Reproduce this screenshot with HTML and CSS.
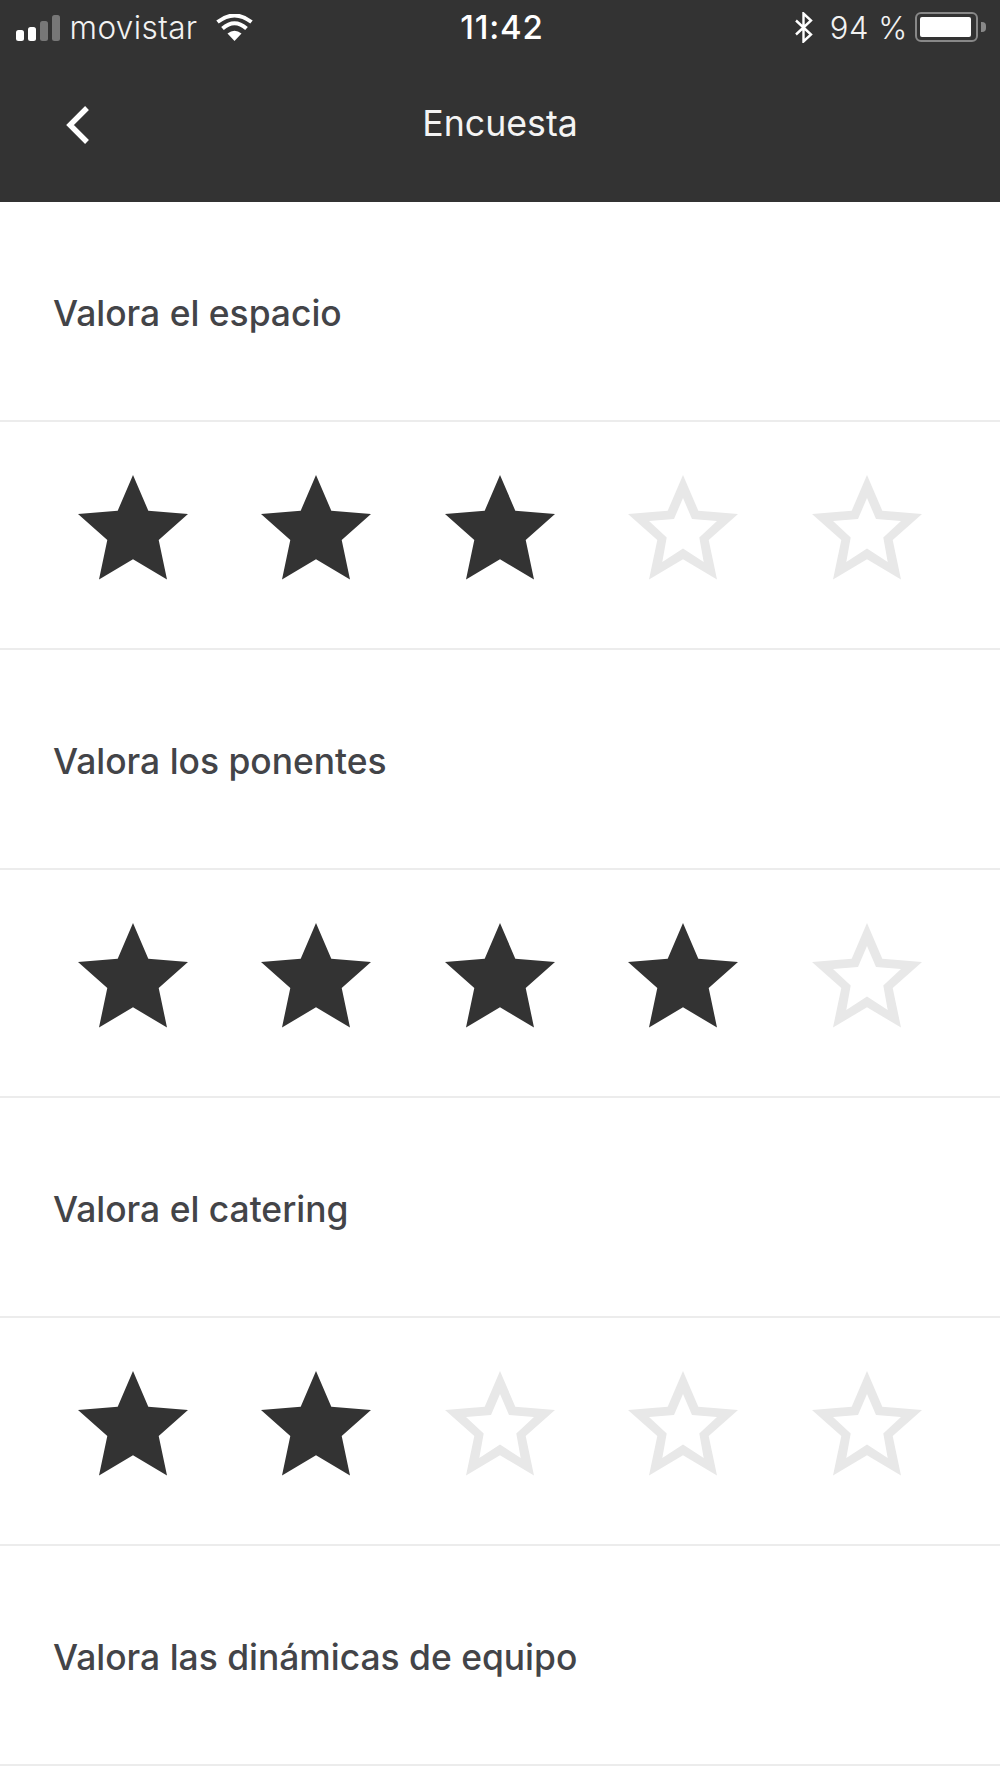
FILE: index.html
```html
<!DOCTYPE html>
<html lang="es">
<head>
<meta charset="utf-8">
<title>Encuesta</title>
<link rel="stylesheet" href="styles.css">
</head>
<body>
<header class="header">
  <div class="status">
    <div class="status-left">
      <div class="signal"><i class="b1"></i><i class="b2"></i><i class="b3 off"></i><i class="b4 off"></i></div>
      <span class="carrier">movistar</span>
      <svg class="wifi" viewBox="0 0 37 27"><path d="M18.5 27 L11.5 19.5 Q18.5 14 25.5 19.5 Z" fill="#fff"/><path d="M6.5 14.5 Q18.5 4 30.5 14.5" fill="none" stroke="#fff" stroke-width="4"/><path d="M1.5 8 Q18.5 -5 35.5 8" fill="none" stroke="#fff" stroke-width="4"/></svg>
    </div>
    <span class="time">11:42</span>
    <div class="status-right">
      <svg class="bt" viewBox="0 0 18 31"><path d="M1 8.5 L16 22.5 L8.5 29.5 V1.5 L16 8.5 L1 22.5" fill="none" stroke="#fff" stroke-width="2.4"/></svg>
      <span class="pct">94 %</span>
      <div class="battery"><div class="battery-fill"></div></div>
      <div class="nub"></div>
    </div>
  </div>
  <div class="nav">
    <svg class="back" viewBox="0 0 25 40"><path d="M22 3 L5 20 L22 37" fill="none" stroke="#fff" stroke-width="5.4"/></svg>
    <h1 class="nav-title">Encuesta</h1>
  </div>
</header>
<main>
  <h2 class="question">Valora el espacio</h2>
  <div class="stars">
    <svg class="star" viewBox="0 0 110 105"><path class="on" d="M55 0 L70.3 35.7 L110 39 L80.7 65 L89 104.5 L55 84.3 L21 104.5 L29.3 65 L0 39 L39.7 35.7 Z"/></svg>
    <svg class="star" viewBox="0 0 110 105"><path class="on" d="M55 0 L70.3 35.7 L110 39 L80.7 65 L89 104.5 L55 84.3 L21 104.5 L29.3 65 L0 39 L39.7 35.7 Z"/></svg>
    <svg class="star" viewBox="0 0 110 105"><path class="on" d="M55 0 L70.3 35.7 L110 39 L80.7 65 L89 104.5 L55 84.3 L21 104.5 L29.3 65 L0 39 L39.7 35.7 Z"/></svg>
    <svg class="star" viewBox="0 0 110 105"><path class="off" fill-rule="evenodd" d="M55 0 L70.3 35.7 L110 39 L80.7 65 L89 104.5 L55 84.3 L21 104.5 L29.3 65 L0 39 L39.7 35.7 Z M55 23 L46 44 L21 46 L38.7 62.5 L34.3 87 L55 73.5 L75.7 87 L71.3 62.5 L89 46 L64 44 Z"/></svg>
    <svg class="star" viewBox="0 0 110 105"><path class="off" fill-rule="evenodd" d="M55 0 L70.3 35.7 L110 39 L80.7 65 L89 104.5 L55 84.3 L21 104.5 L29.3 65 L0 39 L39.7 35.7 Z M55 23 L46 44 L21 46 L38.7 62.5 L34.3 87 L55 73.5 L75.7 87 L71.3 62.5 L89 46 L64 44 Z"/></svg>
  </div>
  <h2 class="question">Valora los ponentes</h2>
  <div class="stars">
    <svg class="star" viewBox="0 0 110 105"><path class="on" d="M55 0 L70.3 35.7 L110 39 L80.7 65 L89 104.5 L55 84.3 L21 104.5 L29.3 65 L0 39 L39.7 35.7 Z"/></svg>
    <svg class="star" viewBox="0 0 110 105"><path class="on" d="M55 0 L70.3 35.7 L110 39 L80.7 65 L89 104.5 L55 84.3 L21 104.5 L29.3 65 L0 39 L39.7 35.7 Z"/></svg>
    <svg class="star" viewBox="0 0 110 105"><path class="on" d="M55 0 L70.3 35.7 L110 39 L80.7 65 L89 104.5 L55 84.3 L21 104.5 L29.3 65 L0 39 L39.7 35.7 Z"/></svg>
    <svg class="star" viewBox="0 0 110 105"><path class="on" d="M55 0 L70.3 35.7 L110 39 L80.7 65 L89 104.5 L55 84.3 L21 104.5 L29.3 65 L0 39 L39.7 35.7 Z"/></svg>
    <svg class="star" viewBox="0 0 110 105"><path class="off" fill-rule="evenodd" d="M55 0 L70.3 35.7 L110 39 L80.7 65 L89 104.5 L55 84.3 L21 104.5 L29.3 65 L0 39 L39.7 35.7 Z M55 23 L46 44 L21 46 L38.7 62.5 L34.3 87 L55 73.5 L75.7 87 L71.3 62.5 L89 46 L64 44 Z"/></svg>
  </div>
  <h2 class="question">Valora el catering</h2>
  <div class="stars">
    <svg class="star" viewBox="0 0 110 105"><path class="on" d="M55 0 L70.3 35.7 L110 39 L80.7 65 L89 104.5 L55 84.3 L21 104.5 L29.3 65 L0 39 L39.7 35.7 Z"/></svg>
    <svg class="star" viewBox="0 0 110 105"><path class="on" d="M55 0 L70.3 35.7 L110 39 L80.7 65 L89 104.5 L55 84.3 L21 104.5 L29.3 65 L0 39 L39.7 35.7 Z"/></svg>
    <svg class="star" viewBox="0 0 110 105"><path class="off" fill-rule="evenodd" d="M55 0 L70.3 35.7 L110 39 L80.7 65 L89 104.5 L55 84.3 L21 104.5 L29.3 65 L0 39 L39.7 35.7 Z M55 23 L46 44 L21 46 L38.7 62.5 L34.3 87 L55 73.5 L75.7 87 L71.3 62.5 L89 46 L64 44 Z"/></svg>
    <svg class="star" viewBox="0 0 110 105"><path class="off" fill-rule="evenodd" d="M55 0 L70.3 35.7 L110 39 L80.7 65 L89 104.5 L55 84.3 L21 104.5 L29.3 65 L0 39 L39.7 35.7 Z M55 23 L46 44 L21 46 L38.7 62.5 L34.3 87 L55 73.5 L75.7 87 L71.3 62.5 L89 46 L64 44 Z"/></svg>
    <svg class="star" viewBox="0 0 110 105"><path class="off" fill-rule="evenodd" d="M55 0 L70.3 35.7 L110 39 L80.7 65 L89 104.5 L55 84.3 L21 104.5 L29.3 65 L0 39 L39.7 35.7 Z M55 23 L46 44 L21 46 L38.7 62.5 L34.3 87 L55 73.5 L75.7 87 L71.3 62.5 L89 46 L64 44 Z"/></svg>
  </div>
  <h2 class="question">Valora las dinámicas de equipo</h2>
</main>
</body>
</html>
```
FILE: styles.css
```css
* { box-sizing: border-box; }
html, body { margin: 0; padding: 0; background: #fff; }
body { height: 1778px; overflow: hidden; font-family: Inter, "Liberation Sans", sans-serif; }

.header { height: 202px; background: #333; color: #fff; display: flex; flex-direction: column; }
.status { height: 54px; padding: 0 14px 0 16px; display: grid; grid-template-columns: 1fr auto 1fr; align-items: center; }
.status-left { display: flex; align-items: center; }
.signal { display: flex; align-items: flex-end; gap: 4.5px; height: 26px; margin-top: 1px; }
.signal i { display: block; width: 7.5px; background: #fff; border-radius: 2.5px; }
.signal .b1 { height: 11px; }
.signal .b2 { height: 14px; }
.signal .b3 { height: 20px; }
.signal .b4 { height: 26px; }
.signal .off { background: #777; }
.carrier { margin-left: 10px; font-size: 31.5px; font-weight: 300; letter-spacing: .4px; color: #f2f2f2; }
.wifi { width: 37px; height: 27px; margin-left: 18px; }
.time { font-size: 33px; font-weight: 500; letter-spacing: .8px; margin-left: 2px; }
.status-right { display: flex; align-items: center; justify-content: flex-end; }
.bt { width: 18px; height: 31px; margin-right: 17px; }
.pct { font-size: 31px; font-weight: 300; letter-spacing: .6px; color: #f2f2f2; }
.battery { width: 63px; height: 30px; margin-left: 7px; padding: 3px; border: 2px solid #888; border-radius: 6px; }
.battery-fill { width: 51px; height: 100%; background: #fff; border-radius: 2px; }
.nub { width: 5px; height: 10px; margin-left: 3px; background: #888; border-radius: 0 4px 4px 0; }

.nav { flex: 1; position: relative; display: flex; align-items: center; justify-content: center; padding-bottom: 10px; }
.back { position: absolute; left: 65px; top: 51px; width: 25px; height: 40px; }
.nav-title { margin: 0; font-size: 35.7px; font-weight: 400; color: #f4f4f4; }

.question { margin: 0; height: 220px; padding: 4px 0 0 53px; display: flex; align-items: center; border-bottom: 2px solid #ececec; font-size: 35.4px; font-weight: 500; color: #434448; }
.stars { height: 228px; padding: 0 41px 16px; display: grid; grid-template-columns: repeat(5, 183.5px); justify-items: center; align-items: center; border-bottom: 2px solid #ececec; }
.star { width: 110px; height: 105px; display: block; }
.on { fill: #333; }
.off { fill: #e8e8e8; }
```
